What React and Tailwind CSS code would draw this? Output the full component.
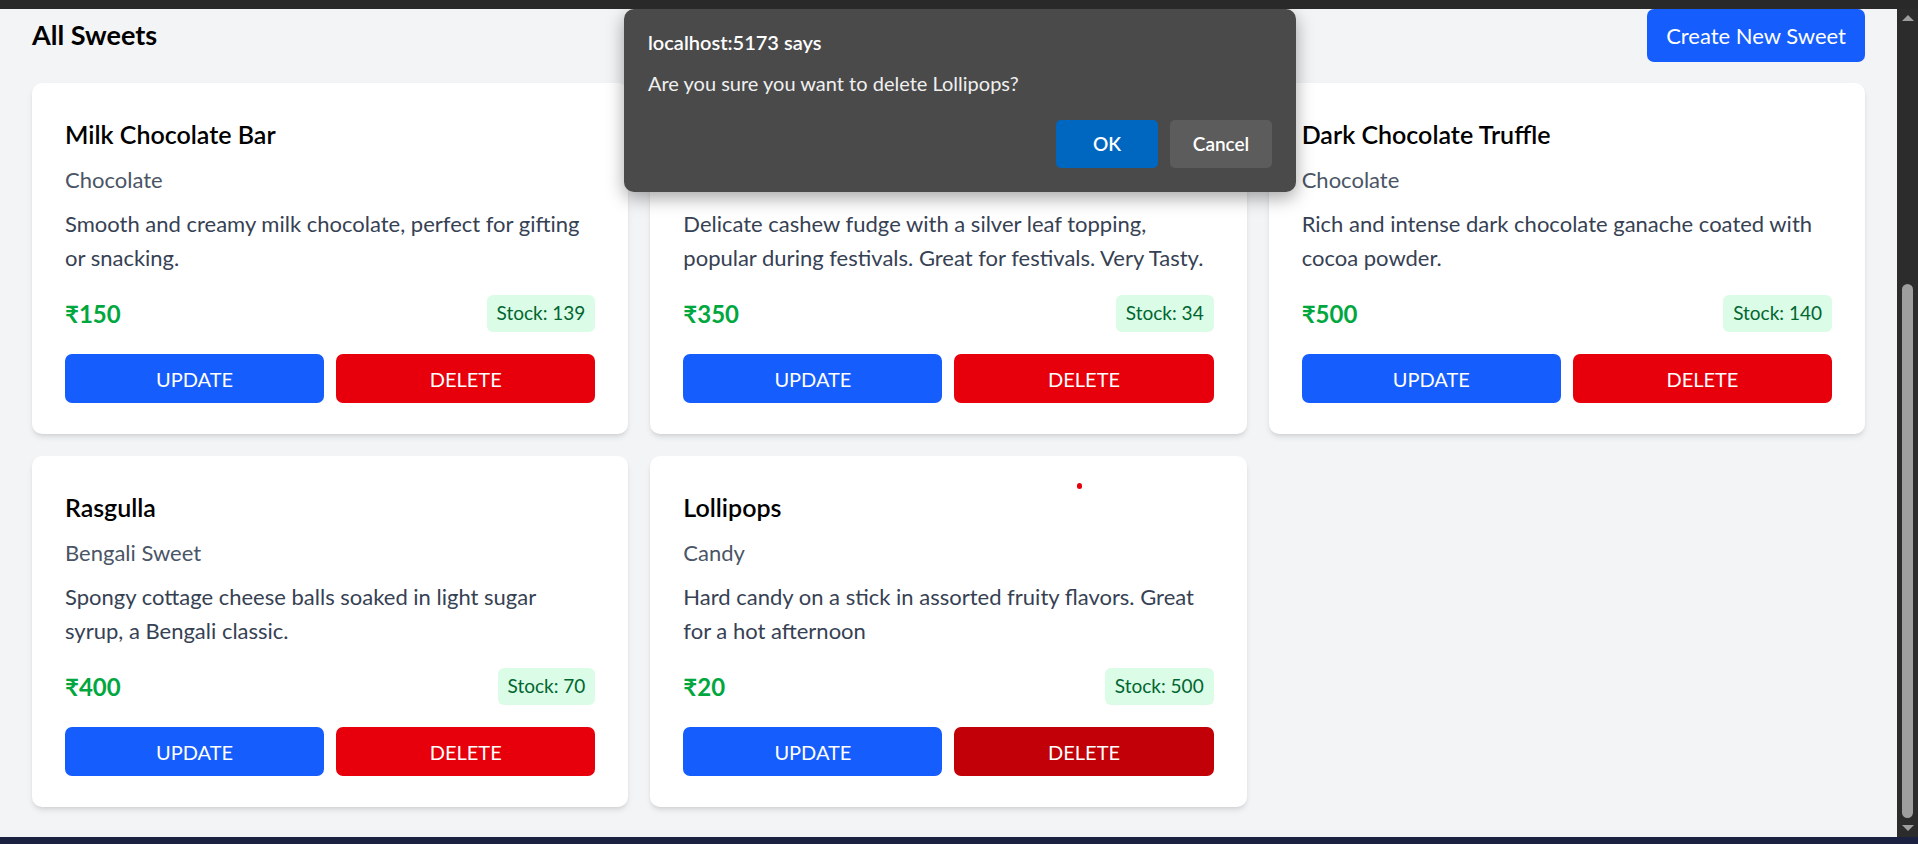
import React from 'react';

const sweets = [
  {
    name: 'Milk Chocolate Bar',
    category: 'Chocolate',
    description: 'Smooth and creamy milk chocolate, perfect for gifting or snacking.',
    price: 150,
    stock: 139,
  },
  {
    name: 'Kaju Katli',
    category: 'Indian Sweet',
    description:
      'Delicate cashew fudge with a silver leaf topping, popular during festivals. Great for festivals. Very Tasty.',
    price: 350,
    stock: 34,
  },
  {
    name: 'Dark Chocolate Truffle',
    category: 'Chocolate',
    description: 'Rich and intense dark chocolate ganache coated with cocoa powder.',
    price: 500,
    stock: 140,
  },
  {
    name: 'Rasgulla',
    category: 'Bengali Sweet',
    description: 'Spongy cottage cheese balls soaked in light sugar syrup, a Bengali classic.',
    price: 400,
    stock: 70,
  },
  {
    name: 'Lollipops',
    category: 'Candy',
    description: 'Hard candy on a stick in assorted fruity flavors. Great for a hot afternoon',
    price: 20,
    stock: 500,
    hovered: true,
  },
];

function SweetCard({ sweet }) {
  return (
    <div className="relative bg-white rounded-[10px] shadow-md px-[33px] pt-[34px] pb-[31px] flex flex-col">
      {/* cursor dot from the screen recording */}
      {sweet.hovered && (
        <span className="absolute left-[427px] top-[27px] w-[5px] h-[6px] rounded-full bg-red-600" />
      )}
      <h3 className="text-[25px] leading-[35px] font-semibold text-black">{sweet.name}</h3>
      <p className="mt-[11px] text-[22px] leading-[34px] text-gray-600">{sweet.category}</p>
      <p className="mt-[10px] text-[22px] leading-[34px] text-gray-700">{sweet.description}</p>
      <div className="mt-[20px] flex items-center justify-between">
        <span className="text-[24px] leading-[37px] font-bold text-green-600">₹{sweet.price}</span>
        <span className="h-[37px] px-[10px] flex items-center rounded-[6px] bg-green-100 text-green-800 text-[19px]">
          Stock: {sweet.stock}
        </span>
      </div>
      <div className="mt-[22px] grid grid-cols-2 gap-[12px]">
        <button className="h-[49px] rounded-[7px] bg-blue-600 text-white text-[20px]">UPDATE</button>
        <button
          className={`h-[49px] rounded-[7px] text-white text-[20px] ${
            sweet.hovered ? 'bg-red-700' : 'bg-red-600'
          }`}>
          DELETE
        </button>
      </div>
    </div>
  );
}

function ConfirmDialog() {
  return (
    <div className="absolute left-[624px] top-0 w-[672px] h-[183px] bg-[#4a4a4a] rounded-[10px] shadow-[0_6px_18px_rgba(0,0,0,0.35)] px-[24px] pt-[19px] pb-[24px] flex flex-col">
      <p className="text-[20px] leading-[28px] font-semibold text-white">localhost:5173 says</p>
      <p className="mt-[13px] text-[20px] leading-[28px] text-[#f0f0f0]">
        Are you sure you want to delete Lollipops?
      </p>
      <div className="mt-auto flex justify-end gap-[12px]">
        <button className="w-[102px] h-[48px] rounded-[5px] bg-[#0067c0] text-white text-[19px] font-semibold">
          OK
        </button>
        <button className="w-[102px] h-[48px] rounded-[5px] bg-[#5c5c5c] text-white text-[19px] font-semibold">
          Cancel
        </button>
      </div>
    </div>
  );
}

function Scrollbar() {
  return (
    <div className="w-[21px] bg-[#2c2c2c] flex flex-col items-center pt-[6px] pb-[6px]">
      <span className="w-0 h-0 border-x-[6px] border-x-transparent border-b-[6px] border-b-[#9e9e9e]" />
      <div className="flex-1" />
      <div className="w-[11px] h-[534px] rounded-full bg-[#9e9e9e]" />
      <span className="mt-[7px] w-0 h-0 border-x-[6px] border-x-transparent border-t-[6px] border-t-[#9e9e9e]" />
    </div>
  );
}

export default function App() {
  return (
    <div className="h-[844px] w-full flex flex-col overflow-hidden bg-[#292929] font-['Lato','Segoe_UI',sans-serif]">
      <div className="h-[9px] bg-[#292929]" />
      <div className="flex flex-1 min-h-0">
        <main className="relative flex-1 bg-gray-100 px-[32px] overflow-hidden">
          <div className="h-[53px] flex items-center justify-between">
            <h1 className="text-[27px] font-bold text-black">All Sweets</h1>
            <button className="h-[53px] px-[19px] rounded-[7px] bg-blue-600 text-white text-[22px]">
              Create New Sweet
            </button>
          </div>
          <div className="mt-[21px] grid grid-cols-3 gap-[22px]">
            {sweets.map((s) => (
              <SweetCard key={s.name} sweet={s} />
            ))}
          </div>
          <ConfirmDialog />
        </main>
        <Scrollbar />
      </div>
      <div className="h-[7px] bg-[#1b2141]" />
    </div>
  );
}
